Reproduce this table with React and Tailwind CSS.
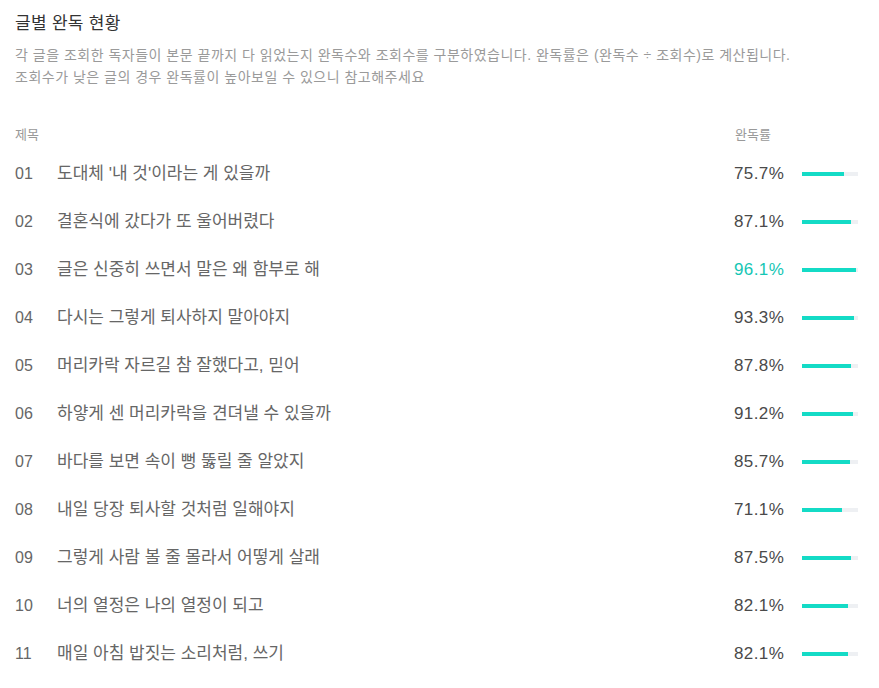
const rows = [
  ['01', "도대체 '내 것'이라는 게 있을까", 75.7],
  ['02', '결혼식에 갔다가 또 울어버렸다', 87.1],
  ['03', '글은 신중히 쓰면서 말은 왜 함부로 해', 96.1],
  ['04', '다시는 그렇게 퇴사하지 말아야지', 93.3],
  ['05', '머리카락 자르길 참 잘했다고, 믿어', 87.8],
  ['06', '하얗게 센 머리카락을 견뎌낼 수 있을까', 91.2],
  ['07', '바다를 보면 속이 뻥 뚫릴 줄 알았지', 85.7],
  ['08', '내일 당장 퇴사할 것처럼 일해야지', 71.1],
  ['09', '그렇게 사람 볼 줄 몰라서 어떻게 살래', 87.5],
  ['10', '너의 열정은 나의 열정이 되고', 82.1],
  ['11', '매일 아침 밥짓는 소리처럼, 쓰기', 82.1],
];

const top = Math.max(...rows.map((r) => r[2]));

function App() {
  return (
    <div className="w-[879px] h-[688px] overflow-hidden bg-white pl-[15px] pr-[21px] pt-[12px] font-['Liberation_Sans','Noto_Sans_CJK_KR',sans-serif]">
      <h2 className="text-[17px] leading-[24px] tracking-[0.3px] text-[#333]">글별 완독 현황</h2>
      <p className="mt-[8px] text-[14px] leading-[22px] tracking-[0.5px] text-[#9a9a9a]">
        각 글을 조회한 독자들이 본문 끝까지 다 읽었는지 완독수와 조회수를 구분하였습니다. 완독률은 (완독수 ÷ 조회수)로 계산됩니다.
        <br />
        조회수가 낮은 글의 경우 완독률이 높아보일 수 있으니 참고해주세요
      </p>
      <div className="mt-[32px] flex h-[30px] items-center text-[13px] text-[#999]">
        <div className="flex-1">제목</div>
        <div className="w-[124px] pl-[1px]">완독률</div>
      </div>
      {rows.map(([no, title, rate]) => {
        const best = rate === top;
        return (
          <div key={no} className="flex h-[48px] items-center">
            <div className="w-[42px] text-[16px] text-[#666]">{no}</div>
            <div className="flex-1 text-[17px] text-[#666]">{title}</div>
            <div className={`w-[68px] text-[17px] tracking-[0.4px] ${best ? 'text-[#15c6b4]' : 'text-[#4a4a4a]'}`}>{rate}%</div>
            <div className="h-[4px] w-[56px] bg-[#eef0f3]">
              <div className="h-full bg-[#14dbc6]" style={{ width: `${rate}%` }} />
            </div>
          </div>
        );
      })}
    </div>
  );
}

export default App;
